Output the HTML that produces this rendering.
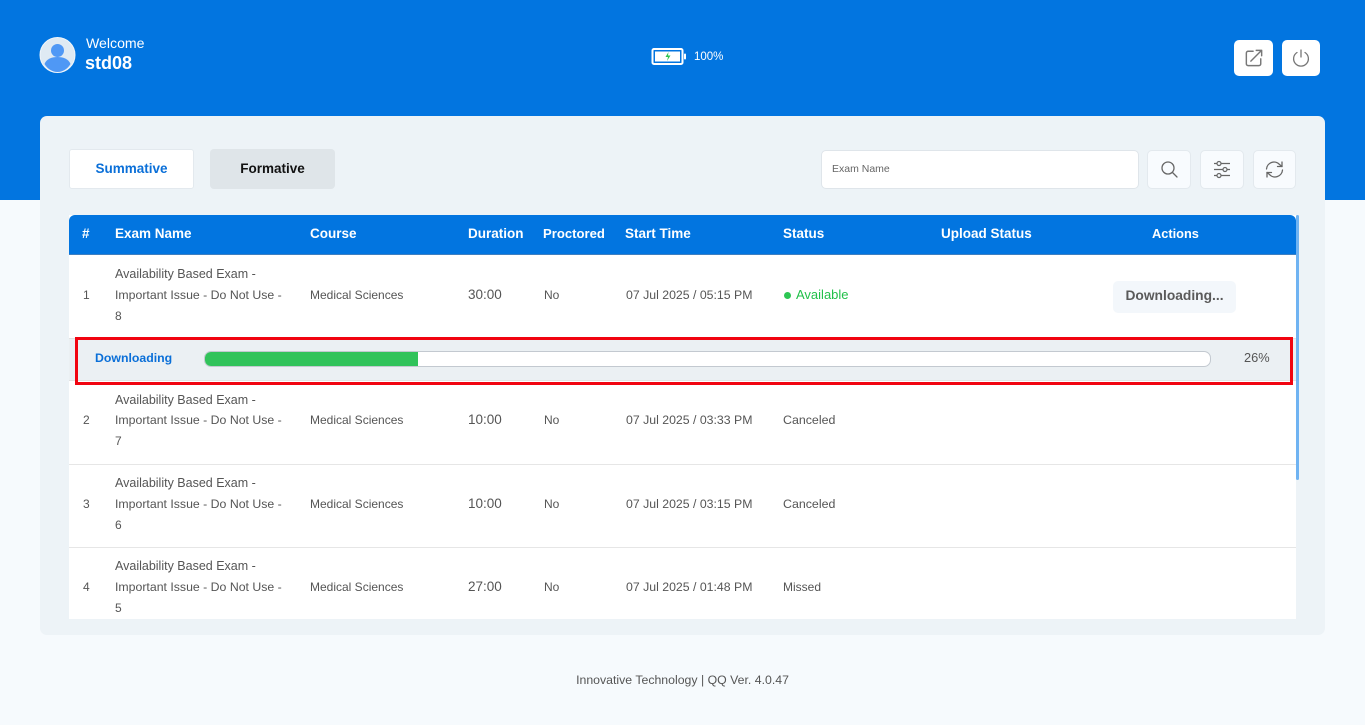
<!DOCTYPE html>
<html lang="en">
<head>
<meta charset="utf-8">
<title>Exams</title>
<style>
html,body{margin:0;padding:0;width:1365px;height:725px;overflow:hidden;background:#f6fafd;font-family:"Liberation Sans",sans-serif;color:#555}
div,span{box-sizing:border-box}
.a{position:absolute}
.t{position:absolute;white-space:nowrap;font-size:12px;line-height:16px;color:#555}
.h{position:absolute;white-space:nowrap;font-size:13.5px;line-height:18px;color:#fff;font-weight:bold;top:225px}
.btn{position:absolute;background:#f8fbfe;border:1px solid #e3e9ee;border-radius:5px}
.line{position:absolute;left:69px;width:1227px;height:1px;background:#e6e6e6}
.av{font-size:12.5px}
.im{font-size:12.3px}
.st{font-size:12.3px}
.du{font-size:13.5px}
.ca{font-size:12.4px}
</style>
</head>
<body>
<div class="a" style="left:0;top:0;width:1365px;height:200px;background:#0275e0"></div>

<svg class="a" style="left:39px;top:37px" width="37" height="37" viewBox="0 0 37 37">
<circle cx="18.5" cy="18" r="17.5" fill="#dfeaf3" stroke="#f1f6fa" stroke-width="1"/>
<circle cx="18.5" cy="13.5" r="6.5" fill="#4f98f5"/>
<path d="M5.5 27c2-5 7-7 13-7s11 2 13 7c-3 5-8 8-13 8s-10-3-13-8z" fill="#4f98f5"/>
</svg>
<div class="t" style="left:86px;top:35px;color:#fff;font-size:14.100px">Welcome</div>
<div class="t" style="left:85px;top:54px;color:#fff;font-size:18px;line-height:18px;font-weight:bold">std08</div>

<svg class="a" style="left:651px;top:47px" width="36" height="19" viewBox="0 0 36 19">
<rect x="1.500" y="2" width="30" height="15" rx="1.500" fill="#0275e0" stroke="#fff" stroke-width="2"/>
<rect x="4" y="4.500" width="25" height="10" fill="#fff"/>
<path d="M17.500 5l-3 5h2.500l-1 4 3.500-5.500h-2.500z" fill="#2dc653"/>
<rect x="33" y="6.500" width="2" height="6" rx="1" fill="#fff"/>
</svg>
<div class="t" style="left:694px;top:49px;color:#fff;font-size:11.500px">100%</div>

<div class="a" style="left:1234px;top:40px;width:39px;height:36px;background:#fff;border-radius:5px"></div>
<svg class="a" style="left:1245px;top:49px" width="18" height="18" viewBox="0 0 20 20" fill="none" stroke="#777" stroke-width="1.600" stroke-linecap="round" stroke-linejoin="round">
<path d="M9 2.500H3.500a2 2 0 0 0-2 2v12a2 2 0 0 0 2 2h12a2 2 0 0 0 2-2V11"/>
<path d="M6.500 13.500L18 2M12.500 1.500H18.500V7.500"/>
</svg>
<div class="a" style="left:1282px;top:40px;width:38px;height:36px;background:#fff;border-radius:5px"></div>
<svg class="a" style="left:1292px;top:49px" width="18" height="18" viewBox="0 0 18 18" fill="none" stroke="#777" stroke-width="1.300" stroke-linecap="round">
<path d="M5 3.500a7.400 7.400 0 1 0 8 0"/>
<path d="M9 1v7"/>
</svg>

<div class="a" style="left:40px;top:116px;width:1285px;height:519px;background:#edf3f7;border-radius:7px"></div>

<div class="a" style="left:69px;top:149px;width:125px;height:40px;background:#fff;border:1px solid #e3e9ee;border-radius:3px"></div>
<div class="t" style="left:69px;width:125px;text-align:center;top:160px;font-size:13.500px;line-height:18px;font-weight:bold;color:#0a6fd8">Summative</div>
<div class="a" style="left:210px;top:149px;width:125px;height:40px;background:#dfe5e9;border-radius:4px"></div>
<div class="t" style="left:210px;width:125px;text-align:center;top:160px;font-size:13.500px;line-height:18px;font-weight:bold;color:#111">Formative</div>

<div class="a" style="left:821px;top:150px;width:318px;height:39px;background:#fff;border:1px solid #dfe5ea;border-radius:5px"></div>
<div class="t" style="left:832px;top:161px;font-size:10.500px;color:#666">Exam Name</div>

<div class="btn" style="left:1147px;top:150px;width:44px;height:39px"></div>
<svg class="a" style="left:1160px;top:160px" width="18" height="18" viewBox="0 0 18 18" fill="none" stroke="#666" stroke-width="1.300" stroke-linecap="round">
<circle cx="8" cy="8" r="6"/><path d="M12.500 12.500L17 17"/>
</svg>
<div class="btn" style="left:1200px;top:150px;width:44px;height:39px"></div>
<svg class="a" style="left:1213px;top:160px" width="18" height="19" viewBox="0 0 18 19" fill="none" stroke="#666" stroke-width="1.200">
<path d="M1 3.500h3M8 3.500h9M1 9.500h9M14 9.500h3M1 15.500h3M8 15.500h9"/>
<circle cx="6" cy="3.500" r="2"/><circle cx="12" cy="9.500" r="2"/><circle cx="6" cy="15.500" r="2"/>
</svg>
<div class="btn" style="left:1253px;top:150px;width:43px;height:39px"></div>
<svg class="a" style="left:1265px;top:160px" width="19" height="19" viewBox="0 0 19 19" fill="none" stroke="#666" stroke-width="1.300" stroke-linecap="round" stroke-linejoin="round">
<path d="M1.500 9A7.500 7.500 0 0 1 14.500 4.500L17 6.500"/><path d="M17 2v4.500h-4.500"/>
<path d="M17.500 10A7.500 7.500 0 0 1 4.500 14.500L2 12.500"/><path d="M2 17v-4.500h4.500"/>
</svg>

<div class="a" style="left:69px;top:215px;width:1227px;height:404px;background:#fff"></div>
<div class="a" style="left:69px;top:215px;width:1227px;height:40px;background:#0275e0;border-radius:6px 6px 0 0;border-bottom:1px solid #3f7fc0"></div>
<div class="a" style="left:1296px;top:215px;width:3px;height:265px;background:#6fb3f2;border-radius:2px"></div>

<div class="h" style="left:82px">#</div>
<div class="h" style="left:115px">Exam Name</div>
<div class="h" style="left:310px">Course</div>
<div class="h" style="left:468px">Duration</div>
<div class="h" style="left:543px;font-size:13.100px">Proctored</div>
<div class="h" style="left:625px">Start Time</div>
<div class="h" style="left:783px">Status</div>
<div class="h" style="left:941px">Upload Status</div>
<div class="h" style="left:1152px;font-size:12.800px">Actions</div>

<!-- Row 1 -->
<div class="t" style="left:83px;top:287px">1</div>
<div class="t av" style="left:115px;top:266px">Availability Based Exam -</div>
<div class="t im" style="left:115px;top:287px">Important Issue - Do Not Use -</div>
<div class="t" style="left:115px;top:308px">8</div>
<div class="t" style="left:310px;top:287px">Medical Sciences</div>
<div class="t du" style="left:468px;top:287px">30:00</div>
<div class="t" style="left:544px;top:287px">No</div>
<div class="t st" style="left:626px;top:287px">07 Jul 2025 / 05:15 PM</div>
<div class="a" style="left:784px;top:292px;width:7px;height:7px;background:#2dc653;border-radius:50%"></div>
<div class="t" style="left:796px;top:287px;color:#22c04a;font-size:13px">Available</div>
<div class="a" style="left:1113px;top:281px;width:123px;height:32px;background:#f3f7fb;border-radius:5px"></div>
<div class="t" style="left:1113px;width:123px;text-align:center;top:287px;font-size:13.800px;line-height:18px;font-weight:bold;color:#5a5a5a">Downloading...</div>

<!-- Progress row -->
<div class="a" style="left:69px;top:338px;width:1227px;height:43px;background:#ebf0f3;border-top:1px solid #e2e2e2;border-bottom:1px solid #e2e2e2"></div>
<div class="a" style="left:75px;top:337px;width:1218px;height:48px;border:3px solid #f10410"></div>
<div class="t" style="left:95px;top:350px;font-weight:bold;color:#0a6fd8;font-size:12.300px">Downloading</div>
<div class="a" style="left:204px;top:351px;width:1007px;height:16px;background:#fff;border:1px solid #c3c9d0;border-radius:7px;overflow:hidden">
  <div style="width:213px;height:14px;background:#31c35a"></div>
</div>
<div class="t" style="left:1244px;top:350px;font-size:12.800px">26%</div>

<!-- Row 2 -->
<div class="t" style="left:83px;top:412px">2</div>
<div class="t av" style="left:115px;top:392px">Availability Based Exam -</div>
<div class="t im" style="left:115px;top:412px">Important Issue - Do Not Use -</div>
<div class="t" style="left:115px;top:433px">7</div>
<div class="t" style="left:310px;top:412px">Medical Sciences</div>
<div class="t du" style="left:468px;top:412px">10:00</div>
<div class="t" style="left:544px;top:412px">No</div>
<div class="t st" style="left:626px;top:412px">07 Jul 2025 / 03:33 PM</div>
<div class="t ca" style="left:783px;top:412px">Canceled</div>
<div class="line" style="top:464px"></div>

<!-- Row 3 -->
<div class="t" style="left:83px;top:496px">3</div>
<div class="t av" style="left:115px;top:475px">Availability Based Exam -</div>
<div class="t im" style="left:115px;top:496px">Important Issue - Do Not Use -</div>
<div class="t" style="left:115px;top:517px">6</div>
<div class="t" style="left:310px;top:496px">Medical Sciences</div>
<div class="t du" style="left:468px;top:496px">10:00</div>
<div class="t" style="left:544px;top:496px">No</div>
<div class="t st" style="left:626px;top:496px">07 Jul 2025 / 03:15 PM</div>
<div class="t ca" style="left:783px;top:496px">Canceled</div>
<div class="line" style="top:547px"></div>

<!-- Row 4 -->
<div class="t" style="left:83px;top:579px">4</div>
<div class="t av" style="left:115px;top:558px">Availability Based Exam -</div>
<div class="t im" style="left:115px;top:579px">Important Issue - Do Not Use -</div>
<div class="t" style="left:115px;top:600px">5</div>
<div class="t" style="left:310px;top:579px">Medical Sciences</div>
<div class="t du" style="left:468px;top:579px">27:00</div>
<div class="t" style="left:544px;top:579px">No</div>
<div class="t st" style="left:626px;top:579px">07 Jul 2025 / 01:48 PM</div>
<div class="t" style="left:783px;top:579px">Missed</div>

<div class="t" style="left:0;width:1365px;text-align:center;top:672px;font-size:12.300px;color:#555">Innovative Technology | QQ Ver. 4.0.47</div>
</body>
</html>
